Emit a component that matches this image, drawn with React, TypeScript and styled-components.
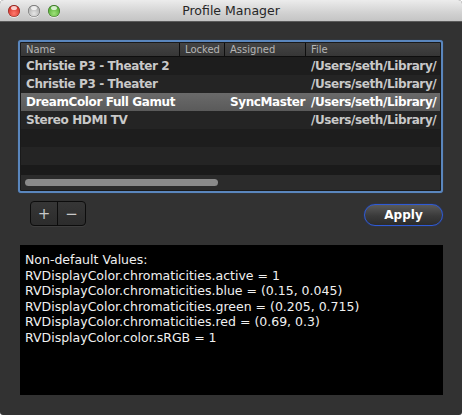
import React from "react";
import styled, { createGlobalStyle } from "styled-components";

const Global = createGlobalStyle`
  html, body { margin: 0; padding: 0; background: #ffffff; }
  body { font-family: "DejaVu Sans", "Liberation Sans", sans-serif; }
  * { box-sizing: border-box; }
`;

const Window = styled.div`
  width: 462px;
  height: 415px;
  display: flex;
  flex-direction: column;
  background: #323232;
  border-radius: 4px 4px 3px 3px;
  overflow: hidden;
`;

const TitleBar = styled.div`
  height: 22px;
  flex: none;
  display: flex;
  align-items: center;
  position: relative;
  background: linear-gradient(#ececec, #d2d2d2 60%, #c4c4c4);
  border-bottom: 1px solid #5a5a5a;
`;

const Lights = styled.div`
  display: flex;
  gap: 8px;
  padding-left: 8px;
`;

const Light = styled.span<{ $c: string; $d: string }>`
  width: 12px;
  height: 12px;
  border-radius: 50%;
  background: radial-gradient(circle at 50% 70%, ${(p) => p.$c} 0%, ${(p) => p.$d} 90%);
  box-shadow: inset 0 0 0 0.5px rgba(0, 0, 0, 0.45), 0 1px 0 rgba(255,255,255,0.6);
  position: relative;
  &::after {
    content: "";
    position: absolute;
    left: 3px;
    top: 1px;
    width: 6px;
    height: 4px;
    border-radius: 50%;
    background: rgba(255, 255, 255, 0.75);
  }
`;

const Title = styled.div`
  position: absolute;
  left: 0;
  right: 0;
  text-align: center;
  font-size: 12.5px;
  color: #262626;
  pointer-events: none;
`;

const Content = styled.div`
  flex: 1;
  display: flex;
  flex-direction: column;
  padding: 18px 19px 20px 18px;
`;

const TableFrame = styled.div`
  height: 153px;
  flex: none;
  border: 2px solid #5a86bd;
  border-radius: 3px;
  padding: 1px;
  background: #1a1a1a;
  display: flex;
  flex-direction: column;
  overflow: hidden;
  box-shadow: 0 0 1px #3b5f8e;
`;

const Header = styled.div`
  height: 14px;
  flex: none;
  display: grid;
  grid-template-columns: 159px 45px 81px 1fr;
  background: linear-gradient(#444, #363636);
  border-bottom: 1px solid #0e0e0e;
`;

const HeadCell = styled.div<{ $last?: boolean }>`
  font-size: 10px;
  line-height: 13px;
  color: #b5b5b5;
  padding-left: 5px;
  white-space: nowrap;
  overflow: hidden;
  border-right: ${(p) => (p.$last ? "none" : "1px solid #0e0e0e")};
`;

const Rows = styled.div`
  flex: 1;
  display: flex;
  flex-direction: column;
  overflow: hidden;
`;

const Row = styled.div<{ $alt: boolean; $sel?: boolean }>`
  height: 18px;
  flex: none;
  display: grid;
  grid-template-columns: 159px 45px 81px 1fr;
  background: ${(p) =>
    p.$sel ? "linear-gradient(#6a6a6a, #5a5a5a)" : p.$alt ? "#242424" : "#1d1d1d"};
  color: ${(p) => (p.$sel ? "#ffffff" : "#c9c9c9")};
`;

const Cell = styled.div`
  font-size: 12px;
  font-weight: bold;
  letter-spacing: -0.4px;
  line-height: 18px;
  padding-left: 5px;
  white-space: nowrap;
  overflow: hidden;
`;

const ScrollTrack = styled.div`
  height: 15px;
  flex: none;
  background: #2b2b2b;
  padding: 4px 0 0 4px;
`;

const Thumb = styled.div`
  width: 193px;
  height: 7px;
  border-radius: 4px;
  background: #8a8a8a;
`;

const Controls = styled.div`
  display: flex;
  justify-content: space-between;
  align-items: flex-start;
  padding: 8px 0 0 12px;
  height: 52px;
  flex: none;
`;

const Segmented = styled.div`
  display: flex;
  height: 25px;
  border: 1px solid #0c0c0c;
  border-radius: 4px;
  background: linear-gradient(#363636, #2c2c2c);
  box-shadow: 0 1px 0 rgba(255, 255, 255, 0.06);
  overflow: hidden;
`;

const SegButton = styled.div<{ $first?: boolean }>`
  width: 27px;
  display: flex;
  align-items: center;
  justify-content: center;
  color: #c8c8c8;
  font-size: 15px;
  font-family: "DejaVu Sans", sans-serif;
  border-right: ${(p) => (p.$first ? "1px solid #0c0c0c" : "none")};
`;

const ApplyButton = styled.div`
  margin-top: 3px;
  width: 79px;
  height: 22px;
  border-radius: 11px;
  border: 1.5px solid #2f5bd6;
  background: linear-gradient(#5a5a5a, #3a3a3a 55%, #2c2c2c);
  color: #ffffff;
  font-size: 12px;
  font-weight: bold;
  display: flex;
  align-items: center;
  justify-content: center;
  box-shadow: 0 0 1px #1e46c8;
`;

const TextPanel = styled.div`
  margin-left: 2px;
  height: 150px;
  flex: none;
  background: #000000;
  padding: 7px 5px;
  color: #f0f0f0;
  font-size: 12.5px;
  line-height: 15.5px;
`;

const Line = styled.div`
  white-space: nowrap;
`;

const rows = [
  { name: "Christie P3 - Theater 2", assigned: "" },
  { name: "Christie P3 - Theater", assigned: "" },
  { name: "DreamColor Full Gamut", assigned: "SyncMaster", sel: true },
  { name: "Stereo HDMI TV", assigned: "" },
];

const lines = [
  "Non-default Values:",
  "RVDisplayColor.chromaticities.active = 1",
  "RVDisplayColor.chromaticities.blue = (0.15, 0.045)",
  "RVDisplayColor.chromaticities.green = (0.205, 0.715)",
  "RVDisplayColor.chromaticities.red = (0.69, 0.3)",
  "RVDisplayColor.color.sRGB = 1",
];

export default function App() {
  return (
    <>
      <Global />
      <Window>
        <TitleBar>
          <Lights>
            <Light $c="#ff7a6e" $d="#c41a12" />
            <Light $c="#e6e6e6" $d="#9a9a9a" />
            <Light $c="#9fe27a" $d="#3a9a1c" />
          </Lights>
          <Title>Profile Manager</Title>
        </TitleBar>
        <Content>
          <TableFrame>
            <Header>
              <HeadCell>Name</HeadCell>
              <HeadCell>Locked</HeadCell>
              <HeadCell>Assigned</HeadCell>
              <HeadCell $last>File</HeadCell>
            </Header>
            <Rows>
              {[0, 1, 2, 3, 4, 5].map((i) => {
                const r = rows[i];
                return (
                  <Row key={i} $alt={i % 2 === 1} $sel={r?.sel}>
                    <Cell>{r ? r.name : ""}</Cell>
                    <Cell />
                    <Cell>{r ? r.assigned : ""}</Cell>
                    <Cell>{r ? "/Users/seth/Library/" : ""}</Cell>
                  </Row>
                );
              })}
            </Rows>
            <ScrollTrack>
              <Thumb />
            </ScrollTrack>
          </TableFrame>
          <Controls>
            <Segmented>
              <SegButton $first>+</SegButton>
              <SegButton>−</SegButton>
            </Segmented>
            <ApplyButton>Apply</ApplyButton>
          </Controls>
          <TextPanel>
            {lines.map((l) => (
              <Line key={l}>{l}</Line>
            ))}
          </TextPanel>
        </Content>
      </Window>
    </>
  );
}
